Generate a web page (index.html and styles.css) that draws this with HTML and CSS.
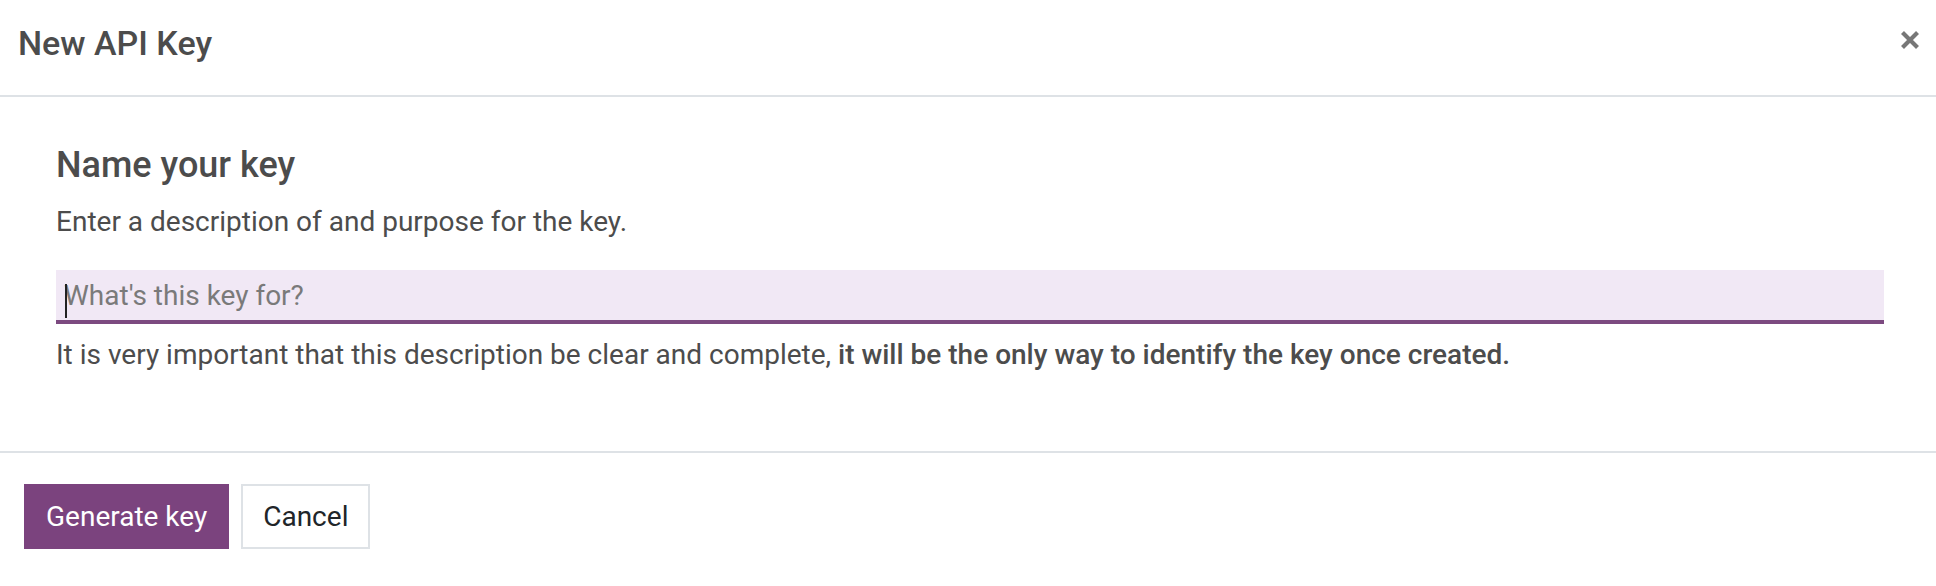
FILE: index.html
```html
<!DOCTYPE html>
<html lang="en">
<head>
<meta charset="utf-8">
<title>New API Key</title>
<link rel="stylesheet" href="styles.css">
</head>
<body>
<div class="modal">
  <header class="modal-header">
    <h4 class="modal-title">New API Key</h4>
    <button class="close" type="button" aria-label="Close">
      <svg width="20" height="20" viewBox="0 0 20 20"><path d="M2.5 2.5 L17.5 17.5 M17.5 2.5 L2.5 17.5" stroke="#777" stroke-width="4.2" stroke-linecap="butt" fill="none"/></svg>
    </button>
  </header>
  <main class="modal-body">
    <h3 class="subtitle">Name your key</h3>
    <p class="desc">Enter a description of and purpose for the key.</p>
    <div class="field">
      <input class="input" type="text" placeholder="What's this key for?">
      <span class="caret"></span>
    </div>
    <p class="help">It is very important that this description be clear and complete, <b class="strong">it will be the only way to identify the key once created.</b></p>
  </main>
  <footer class="modal-footer">
    <button class="btn btn-primary" type="button">Generate key</button>
    <button class="btn btn-secondary" type="button">Cancel</button>
  </footer>
</div>
</body>
</html>
```

FILE: styles.css
```css
html, body {
  margin: 0;
  padding: 0;
  background: #ffffff;
}
body {
  width: 1936px;
  height: 586px;
  overflow: hidden;
  font-family: Roboto, "Noto Sans", "Liberation Sans", sans-serif;
  color: #4c4c4c;
}
.modal {
  display: flex;
  flex-direction: column;
}
.modal-header {
  display: flex;
  justify-content: space-between;
  align-items: flex-start;
  padding: 18px 16px 27px 18px;
  border-bottom: 2px solid #dee2e6;
}
.modal-title {
  margin: 0;
  font-size: 34px;
  line-height: 50px;
  font-weight: 500;
  color: #4c4c4c;
}
.close {
  margin: 12px 0 0 0;
  padding: 0;
  border: 0;
  background: transparent;
  width: 20px;
  height: 20px;
  display: block;
}
.close svg { display: block; }
.modal-body {
  padding: 46px 52px 75px 56px;
}
.subtitle {
  margin: 0 0 14px 0;
  font-size: 36px;
  line-height: 44px;
  font-weight: 500;
  color: #4c4c4c;
}
.desc {
  margin: 0 0 27px 0;
  font-size: 28px;
  line-height: 42px;
}
.field {
  position: relative;
}
.input {
  display: block;
  box-sizing: border-box;
  width: 100%;
  height: 54px;
  margin: 0;
  padding: 0 8px;
  border: 0;
  border-bottom: 4px solid #7c4a80;
  background: #f1e8f5;
  font-family: inherit;
  font-size: 28px;
  color: #4c4c4c;
  outline: none;
}
.input::placeholder {
  color: #7a7a7a;
  opacity: 1;
}
.caret {
  position: absolute;
  left: 9px;
  top: 14px;
  width: 2px;
  height: 34px;
  background: #222;
}
.help {
  margin: 10px 0 0 0;
  font-size: 28px;
  line-height: 42px;
}
.strong {
  font-weight: 500;
}
.modal-footer {
  display: flex;
  gap: 12px;
  padding: 31px 24px 37px 24px;
  border-top: 2px solid #dee2e6;
}
.btn {
  font-family: inherit;
  font-size: 28px;
  line-height: 42px;
  font-weight: 400;
  padding: 9.5px 20px;
  border: 2px solid transparent;
  border-radius: 0;
  cursor: pointer;
}
.btn-primary {
  background: #7b437e;
  border-color: #7b437e;
  color: #ffffff;
}
.btn-secondary {
  background: #ffffff;
  border-color: #dee2e6;
  color: #212529;
}
```
